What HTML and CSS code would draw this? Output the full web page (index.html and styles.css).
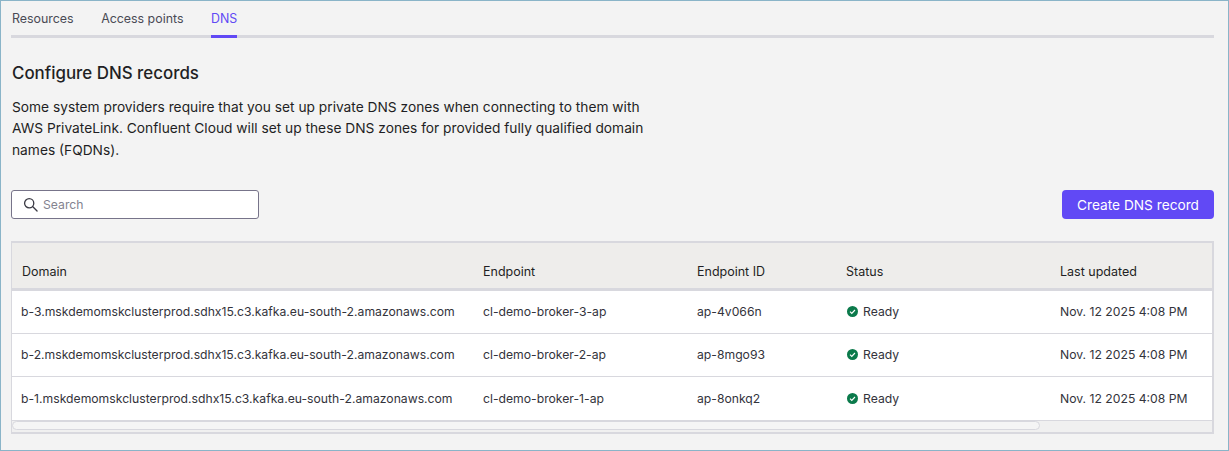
FILE: index.html
```html
<!DOCTYPE html>
<html lang="en">
<head>
  <meta charset="UTF-8" />
  <title>Configure DNS records</title>
  <link rel="stylesheet" href="styles.css">
</head>
<body>
  <div class="frame">
    <nav class="tabs">
      <a class="tab">Resources</a>
      <a class="tab">Access points</a>
      <a class="tab active">DNS</a>
    </nav>

    <h2 class="title">Configure DNS records</h2>
    <p class="intro">Some system providers require that you set up private DNS zones when connecting to them with AWS PrivateLink. Confluent Cloud will set up these DNS zones for provided fully qualified domain names (FQDNs).</p>

    <div class="toolbar">
      <label class="search">
        <svg width="15" height="15" viewBox="0 0 16 16" fill="none" stroke="#3a3a44" stroke-width="1.4" stroke-linecap="round">
          <circle cx="6.6" cy="6.6" r="4.9" />
          <path d="M10.2 10.2L15 15" />
        </svg>
        <span>Search</span>
      </label>
      <button class="create">Create DNS record</button>
    </div>

    <div class="table">
      <div class="row head">
        <div>Domain</div>
        <div>Endpoint</div>
        <div>Endpoint ID</div>
        <div>Status</div>
        <div>Last updated</div>
      </div>
      <div class="row">
        <div>b-3.mskdemomskclusterprod.sdhx15.c3.kafka.eu-south-2.amazonaws.com</div>
        <div>cl-demo-broker-3-ap</div>
        <div>ap-4v066n</div>
        <div class="status">
          <svg width="11" height="11" viewBox="0 0 12 12"><circle cx="6" cy="6" r="6" fill="#0b7a4b" /><path d="M3.3 6.2L5.2 8L8.7 4.4" fill="none" stroke="#fff" stroke-width="1.3" /></svg>
          Ready
        </div>
        <div>Nov. 12 2025 4:08 PM</div>
      </div>
      <div class="row">
        <div>b-2.mskdemomskclusterprod.sdhx15.c3.kafka.eu-south-2.amazonaws.com</div>
        <div>cl-demo-broker-2-ap</div>
        <div>ap-8mgo93</div>
        <div class="status">
          <svg width="11" height="11" viewBox="0 0 12 12"><circle cx="6" cy="6" r="6" fill="#0b7a4b" /><path d="M3.3 6.2L5.2 8L8.7 4.4" fill="none" stroke="#fff" stroke-width="1.3" /></svg>
          Ready
        </div>
        <div>Nov. 12 2025 4:08 PM</div>
      </div>
      <div class="row last">
        <div>b-1.mskdemomskclusterprod.sdhx15.c3.kafka.eu-south-2.amazonaws.com</div>
        <div>cl-demo-broker-1-ap</div>
        <div>ap-8onkq2</div>
        <div class="status">
          <svg width="11" height="11" viewBox="0 0 12 12"><circle cx="6" cy="6" r="6" fill="#0b7a4b" /><path d="M3.3 6.2L5.2 8L8.7 4.4" fill="none" stroke="#fff" stroke-width="1.3" /></svg>
          Ready
        </div>
        <div>Nov. 12 2025 4:08 PM</div>
      </div>
      <div class="scrollbar"><div class="thumb"></div></div>
    </div>
  </div>
</body>
</html>
```
FILE: styles.css
```css
html, body {
  margin: 0;
  height: 100%;
}
body {
  font-family: Inter, Roboto, sans-serif;
  font-size: 14px;
  color: #1f1f24;
  background: #f3f3f3;
  overflow: hidden;
}
.frame {
  box-sizing: border-box;
  height: 451px;
  padding: 0 14px 0 10px;
  border: 1px solid #8ab4c8;
}
.tabs {
  display: flex;
  gap: 27.5px;
  height: 34px;
  padding-left: 1px;
  border-bottom: 3px solid #d8d8de;
}
.tab {
  height: 34px;
  line-height: 35px;
  font-size: 12.4px;
  color: #4a4a55;
}
.tab.active {
  color: #6149f5;
  border-bottom: 3px solid #6149f5;
}
.title {
  margin: 23px 0 0 1px;
  font-size: 16.9px;
  line-height: 24px;
  font-weight: 500;
}
.intro {
  width: 634px;
  margin: 11.5px 0 0 1px;
  font-size: 13.75px;
  line-height: 21.5px;
}
.toolbar {
  display: flex;
  justify-content: space-between;
  margin-top: 28.5px;
}
.search {
  box-sizing: border-box;
  display: flex;
  align-items: center;
  gap: 5px;
  width: 248px;
  height: 29px;
  padding-left: 11px;
  font-size: 12.2px;
  color: #83838f;
  background: #fff;
  border: 1px solid #77748a;
  border-radius: 3px;
}
.create {
  width: 152px;
  height: 29px;
  padding: 1px 0 0;
  font-family: inherit;
  font-size: 13.7px;
  color: #fff;
  background: #6149f5;
  border: 0;
  border-radius: 4px;
}
.table {
  margin-top: 22px;
  background: #fff;
  border: 2px solid #d8d8de;
  border-width: 2px 2px 2px 1px;
  font-size: 12.2px;
}
.row {
  display: grid;
  grid-template-columns: 462px 214px 149px 214px 1fr;
  height: 42px;
  align-items: center;
  padding-left: 9px;
  color: #33333b;
  border-bottom: 1px solid #d8d8de;
}
.row > div {
  white-space: nowrap;
}
.row.head {
  box-sizing: border-box;
  height: 48px;
  padding: 0 0 9px 10px;
  grid-template-columns: 461px 214px 149px 214px 1fr;
  align-items: end;
  font-size: 12.5px;
  color: #1f1f24;
  background: #eeedeb;
  border-bottom-width: 3px;
}
.row.last {
  height: 43px;
}
.status {
  display: flex;
  align-items: center;
  gap: 5px;
  padding-left: 1px;
}
.scrollbar {
  height: 11px;
  background: #f0f0f0;
}
.thumb {
  box-sizing: border-box;
  width: 1028px;
  height: 9px;
  background: #f5f5f5;
  border: 1px solid #d8d8de;
  border-radius: 5px;
}
```
